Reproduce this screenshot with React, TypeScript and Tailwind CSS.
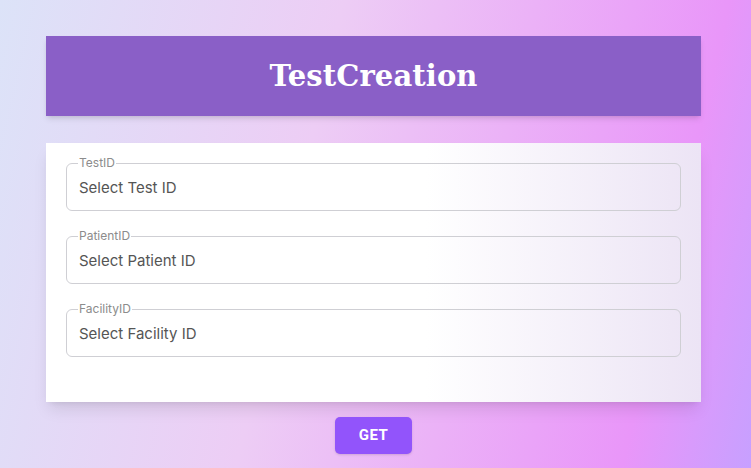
import { useState } from "react";

const fields = [
  { label: "TestID", placeholder: "Select Test ID" },
  { label: "PatientID", placeholder: "Select Patient ID" },
  { label: "FacilityID", placeholder: "Select Facility ID" },
];

const App = () => {
  const [values, setValues] = useState<Record<string, string>>({});

  return (
    <div className="min-h-screen w-full bg-[linear-gradient(103deg,#dce3f8_0%,#edcdf5_40%,#e996f9_85%,#c7a0ff_100%)] pt-[36px] font-['Inter',sans-serif]">
      <div className="ml-[46px] w-[655px]">
        <div className="h-[80px] bg-[#8a5fc7] flex items-center justify-center shadow-md">
          <h1 className="text-white text-[29px] font-bold font-['DejaVu_Serif',serif] leading-none tracking-[0.1px]">
            TestCreation
          </h1>
        </div>

        <div className="mt-[27px] bg-[linear-gradient(90deg,#ffffff_58%,#ece4f5_100%)] shadow-lg px-[20px] pt-[14px] pb-[45px] flex flex-col gap-[19px]">
          {fields.map((f) => (
            <fieldset
              key={f.label}
              className="border border-[#cfcfd4] rounded-[6px] px-[12px] pt-[9px] pb-[12px] min-w-0"
            >
              <legend className="-ml-[1px] px-[1px] text-[12px] leading-[12px] text-[#8c8c8c]">
                {f.label}
              </legend>
              <input
                value={values[f.label] ?? ""}
                onChange={(e) =>
                  setValues({ ...values, [f.label]: e.target.value })
                }
                placeholder={f.placeholder}
                className="block w-full h-[20px] text-[15px] leading-[20px] text-[#444] placeholder:text-[#555] outline-none bg-transparent"
              />
            </fieldset>
          ))}
        </div>

        <div className="flex justify-center mt-[15px]">
          <button className="w-[77px] h-[37px] rounded-[5px] bg-[#9254fb] text-white text-[15px] font-bold tracking-[0.5px] font-['Roboto',sans-serif] shadow-sm">
            GET
          </button>
        </div>
      </div>
    </div>
  );
};

export default App;
